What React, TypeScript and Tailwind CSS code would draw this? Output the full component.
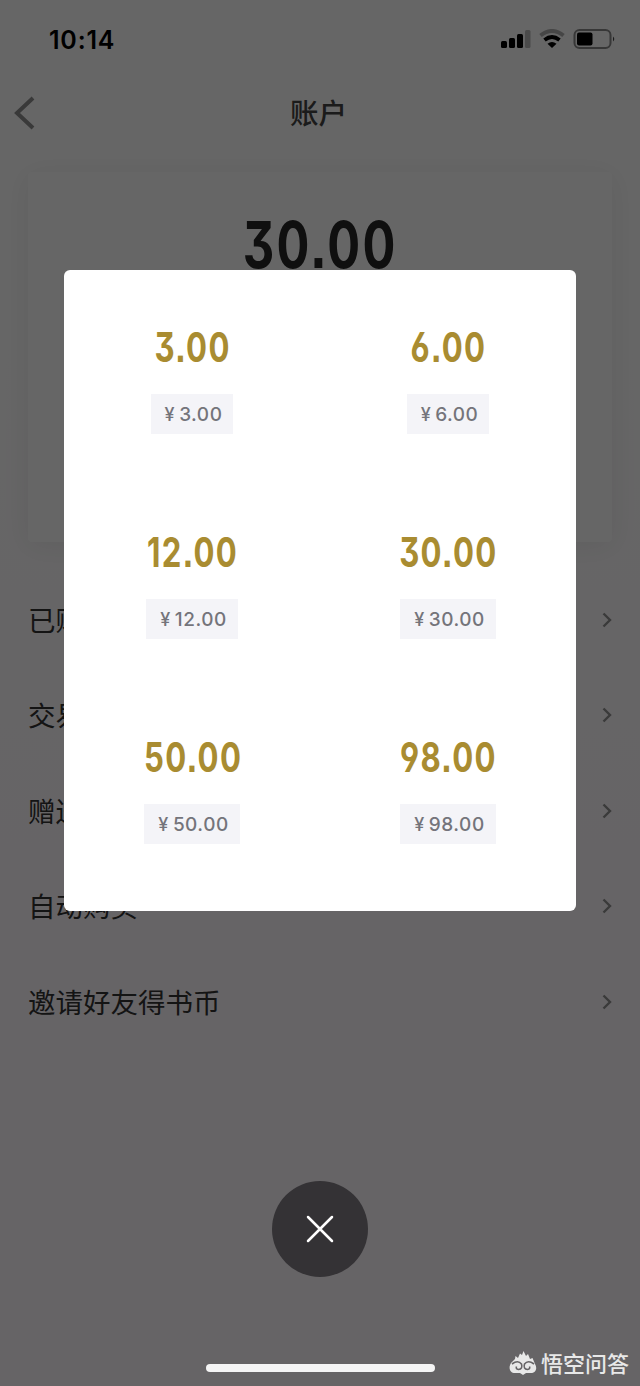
import clsx from "clsx";

const menu = ["已购内容", "交易记录", "赠送记录", "自动购买", "邀请好友得书币"];

const amounts = ["3.00", "6.00", "12.00", "30.00", "50.00", "98.00"];

function Amount({ value, className }: { value: string; className?: string }) {
  return (
    <p
      className={clsx(
        "scale-x-[0.75] whitespace-nowrap font-['Inter',sans-serif] font-bold [font-feature-settings:'cv03','cv04','cv09','ss07']",
        className
      )}
    >
      {value}
    </p>
  );
}

function Chevron() {
  return (
    <svg width="10" height="16" viewBox="0 0 10 16" fill="none" className="text-[#919191]">
      <path d="M1.5 1.5L8 8L1.5 14.5" stroke="currentColor" strokeWidth="2.4" />
    </svg>
  );
}

function StatusBar() {
  return (
    <div className="flex h-[78px] items-center justify-between pl-[49px] pr-[25px]">
      <p className="pt-0.5 font-['Inter',sans-serif] text-[25px] font-semibold leading-none tracking-[0.8px] text-black">
        10:14
      </p>
      <svg width="114" height="20" viewBox="0 0 114 20" fill="none">
        <rect x="0" y="12" width="6" height="7" rx="1.5" fill="#000" />
        <rect x="8" y="9" width="6" height="10" rx="1.5" fill="#000" />
        <rect x="16" y="5" width="6" height="14" rx="1.5" fill="#000" />
        <rect x="24" y="1" width="5.5" height="18" rx="1.5" fill="#bbb" />
        <path d="M39.5 6.5Q51 -2.5 62.5 6.5" stroke="#b0b0b0" strokeWidth="4" />
        <path d="M43.5 11Q51 5 58.5 11" stroke="#000" strokeWidth="3.8" />
        <path d="M51 19L46.5 14.7Q51 11.3 55.5 14.7Z" fill="#000" />
        <rect x="73.5" y="1" width="36" height="18" rx="5" stroke="#8a8a8a" strokeWidth="2" />
        <rect x="76" y="3.5" width="15.5" height="13" rx="2" fill="#000" />
        <path d="M112 7.5Q114.5 10 112 12.5Z" fill="#444" />
      </svg>
    </div>
  );
}

function AccountPage() {
  return (
    <div className="h-full bg-linear-to-b from-white from-25% to-[#fffaff] to-70%">
      <StatusBar />
      <div className="grid h-[70px] grid-cols-3 items-center px-3.5">
        <svg width="22" height="34" viewBox="0 0 22 34" fill="none" className="text-[#8f8f8f]">
          <path d="M19 2L3 17L19 32" stroke="currentColor" strokeWidth="4" />
        </svg>
        <h1 className="-ml-[3px] -mt-0.5 text-center text-[28.5px] font-medium text-[#444]">账户</h1>
      </div>
      <div className="mx-7 mt-6 flex h-[370px] justify-center rounded bg-white/50 pt-[37px] shadow-[0_4px_28px_rgba(0,0,0,0.07)]">
        <Amount value="30.00" className="text-[65px] leading-[72px] tracking-[3px] text-[#272727]" />
      </div>
      <ul className="mt-[30px] px-7">
        {menu.map((item) => (
          <li key={item} className="flex h-[95.5px] items-center justify-between">
            <span className="-mt-px text-[27.5px] text-[#333]">{item}</span>
            <Chevron />
          </li>
        ))}
      </ul>
    </div>
  );
}

function RechargeDialog() {
  return (
    <div className="grid h-[641px] w-[512px] grid-cols-2 content-start rounded-md bg-white pt-[54px]">
      {amounts.map((value) => (
        <div key={value} className="flex h-[205px] flex-col items-center">
          <Amount value={value} className="pl-0.5 text-[41.5px] leading-[47px] tracking-[1.8px] text-[#a98c31]" />
          <button className="mt-[23px] flex h-10 items-center gap-1 bg-[#f4f4f8] pl-3.5 pr-[11px] pt-px font-['Inter',sans-serif] text-[19px] leading-none font-medium tracking-[0.5px] text-[#74747b]">
            <span className="text-[18px]">¥</span>
            <span>{value}</span>
          </button>
        </div>
      ))}
    </div>
  );
}

function Watermark() {
  return (
    <div className="flex items-center gap-1 text-[#e8e8e8]">
      <svg width="28" height="25" viewBox="0 0 28 25">
        <path
          d="M2 12L6 8L6.5 5L9 7L11 2.5L13 4L14.5 0L17 5L19 3L21 8L23.5 7L26 13C29 18 26 22 22 22H17L14 24L11 22H6C1 22 -1 17 2 12Z"
          fill="currentColor"
        />
        <path
          d="M3 13Q9 8.5 12.5 13Q14 18 9.5 18.5Q6.5 18 7.5 15.5M25 13Q19 8.5 15.5 13Q14 18 18.5 18.5Q21.5 18 20.5 15.5"
          fill="none"
          stroke="#666466"
          strokeWidth="1.6"
        />
      </svg>
      <span className="-mt-1 text-[22px] font-medium leading-none">悟空问答</span>
    </div>
  );
}

export default function App() {
  return (
    <main className="relative h-[1386px] w-[640px] overflow-hidden font-['Noto_Sans_CJK_SC',sans-serif]">
      <AccountPage />
      <div className="absolute inset-0 flex flex-col items-center bg-black/60 pt-[270px]">
        <RechargeDialog />
        <button className="mt-[270px] flex size-24 items-center justify-center rounded-full bg-[#343235]">
          <svg width="28" height="28" viewBox="0 0 28 28" fill="none">
            <path d="M2 2L26 26M26 2L2 26" stroke="#fff" strokeWidth="2.5" strokeLinecap="round" />
          </svg>
        </button>
      </div>
      <div className="absolute bottom-3.5 left-[206px] h-2 w-[229px] rounded-full bg-[#f5f5f5]" />
      <div className="absolute bottom-2.5 right-[11px]">
        <Watermark />
      </div>
    </main>
  );
}
